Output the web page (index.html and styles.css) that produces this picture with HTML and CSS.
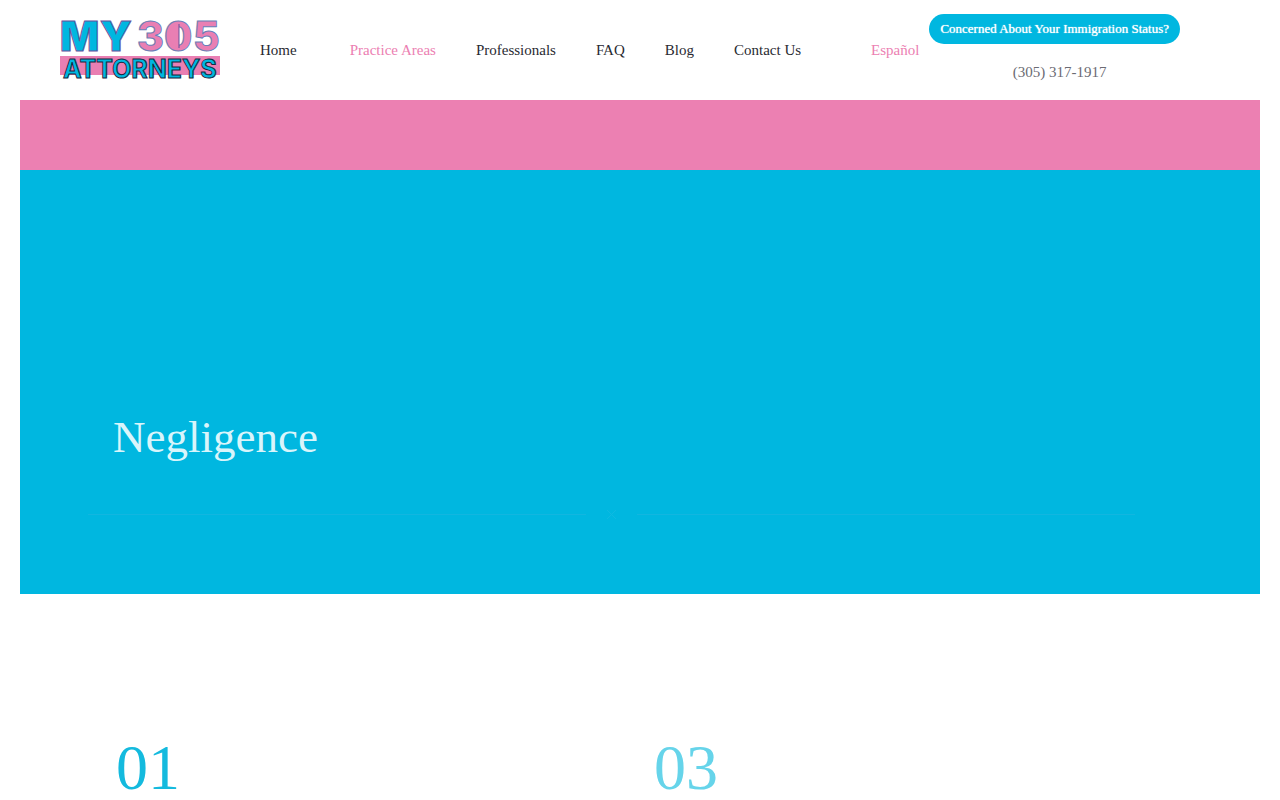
FILE: index.html
```
<!DOCTYPE html>
<html lang="en">
	<head>
		<meta charset="utf-8">
		<title>Negligence - My 305 Attorneys</title>
		<link rel="stylesheet" href="styles.css">
	</head>
	<body>
		<header class="header">
			<a class="logo" href="#" aria-label="My 305 Attorneys">
				<svg width="160" height="80" viewBox="0 -10 160 80">
					<rect y="36" width="160" height="19" fill="#e97fb3"/>
					<text class="logo-my" x="0 40" y="31">MY</text>
					<text class="logo-305" x="77 104 133" y="31">305</text>
					<!-- fat side of the zero -->
					<path fill="#e97fb3" d="M119 4q-9 2-9 12t9 12z"/>
					<path fill="none" stroke="#67529b" d="M119 4v24"/>
					<text class="logo-att" x="3" y="58">ATTORNEYS</text>
				</svg>
			</a>
			<nav class="nav">
				<a class="home" href="#">Home</a>
				<a class="active" href="#">Practice Areas</a>
				<a href="#">Professionals</a>
				<a href="#">FAQ</a>
				<a href="#">Blog</a>
				<a href="#">Contact Us</a>
				<a class="lang" href="#">Español</a>
			</nav>
			<div class="contact">
				<button class="status" type="button">Concerned About Your Immigration Status?</button>
				<a class="phone" href="tel:3053171917">(305) 317-1917</a>
			</div>
		</header>
		<main>
			<section class="hero">
				<h1>Negligence</h1>
				<div class="divider">
					<span class="line"></span>
					<svg width="11" height="11" viewBox="0 0 11 11"><path d="M1 1l9 9M10 1l-9 9" stroke="#0fb9e1"/></svg>
					<span class="line"></span>
				</div>
			</section>
			<section class="steps">
				<div class="number first">01</div>
				<div class="number second">03</div>
			</section>
		</main>
	</body>
</html>
```
FILE: styles.css
```
* {
	box-sizing: border-box;
}

body {
	margin: 0;
	padding: 0 20px;
	background-color: white;
	font-family: "Liberation Serif", "Times New Roman", serif;
	font-size: 15px;
}

a {
	color: #292a31;
	text-decoration: none;
}

.header {
	display: flex;
	align-items: center;
	height: 100px;
	padding: 0 40px;
}

.logo,
.logo svg {
	display: block;
}

.logo-my {
	font: 900 41px Inter, sans-serif;
	fill: #00b7e0;
	stroke: #67529b;
	stroke-width: 1px;
}

.logo-305 {
	font: 800 41px Inter, sans-serif;
	fill: #e97fb3;
	stroke: #6a7fb8;
	stroke-width: 1px;
}

.logo-att {
	font: 700 25px Inter, sans-serif;
	fill: #00b7e0;
	stroke: #17283f;
	stroke-width: 1px;
}

.nav {
	display: flex;
	gap: 40px;
	margin-left: 40px;
	white-space: nowrap;
}

.nav .home {
	margin-right: 13px;
}

.nav .active {
	color: #ec80b2;
}

.nav .lang {
	margin-left: 30px;
	color: #ec80b2;
}

.contact {
	display: flex;
	flex-direction: column;
	align-items: center;
	gap: 20px;
	margin-left: 10px;
	padding-bottom: 6px;
}

.status {
	height: 30px;
	padding: 0 11px;
	border: none;
	border-radius: 15px;
	background-color: #00b7e0;
	color: white;
	font-family: inherit;
	font-size: 13px;
	text-shadow: 0 0 1px white;
	white-space: nowrap;
	cursor: pointer;
}

.phone {
	padding-left: 10px;
	color: #6b6b73;
}

.hero {
	padding: 240px 93px 74px;
	border-top: 70px solid #ec80b2;
	background-color: #00b7e0;
}

.hero h1 {
	margin: 0;
	color: #d9f5fb;
	font-size: 45px;
	font-weight: 400;
	line-height: 54px;
}

.divider {
	display: flex;
	align-items: center;
	gap: 20px;
	margin: 45px 32px 0 -25px;
}

.line {
	flex: 1;
	height: 1px;
	background-color: #12b6e0;
}

.steps {
	display: grid;
	grid-template-columns: 1fr 1fr;
	gap: 32px;
	padding: 143px 100px 0 96px;
}

.number {
	font-size: 64px;
	line-height: 62px;
}

.first {
	color: #14bade;
}

.second {
	color: #66d4ea;
}
```
